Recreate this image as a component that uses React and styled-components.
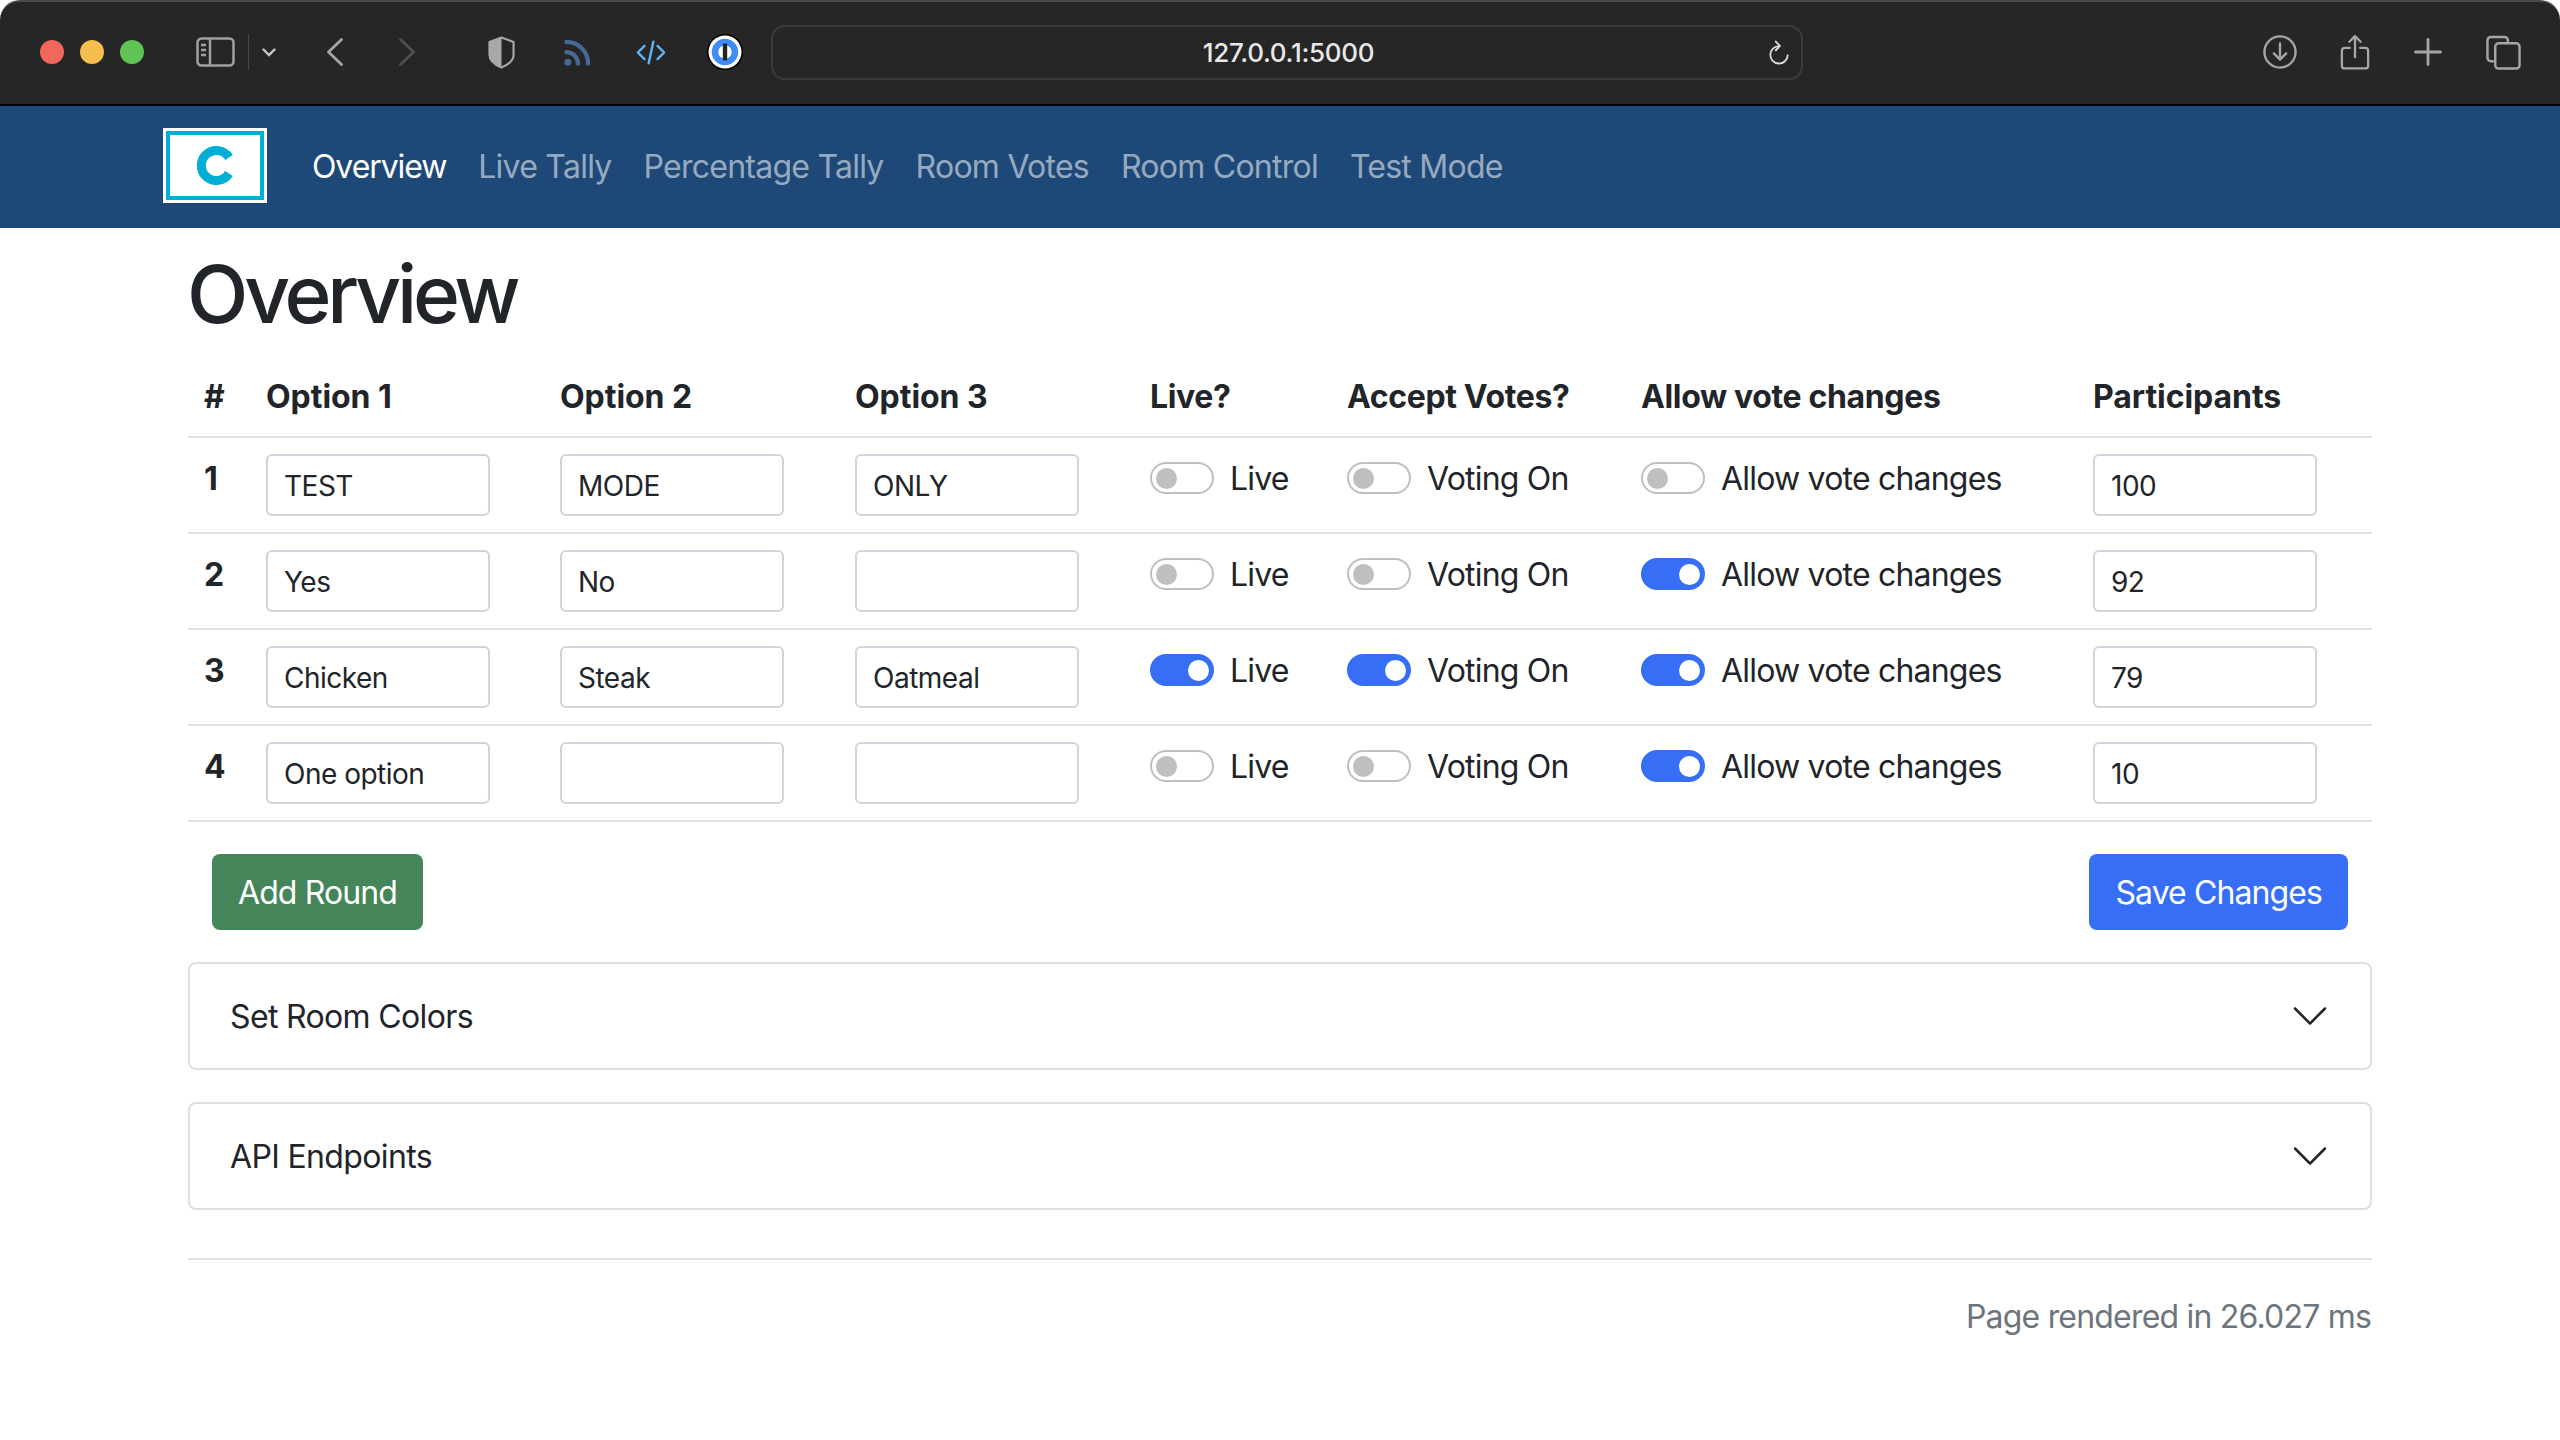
import React from 'react';
import styled, { createGlobalStyle } from 'styled-components';

const GlobalStyle = createGlobalStyle`
  * { box-sizing: border-box; }
  html, body { margin: 0; padding: 0; background: #fff; }
  body {
    font-family: Inter, "Liberation Sans", sans-serif;
    font-size: 32px;
    line-height: 48px;
    letter-spacing: -0.8px;
    color: #212529;
  }
`;

const Chrome = styled.div`
  display: flex;
  align-items: center;
  height: 106px;
  padding-bottom: 2px;
  background: #262626;
  border-top: 2px solid #4a4a4a;
  border-bottom: 2px solid #000;
  border-radius: 20px 20px 0 0;
`;

const Dot = styled.span`
  width: 24px;
  height: 24px;
  margin-left: ${(p) => p.$gap}px;
  border-radius: 50%;
  background: ${(p) => p.$color};
`;

const Glyph = styled.svg`
  display: block;
  flex: none;
  margin-left: ${(p) => p.$gap}px;
`;

const UrlBar = styled.div`
  position: relative;
  display: flex;
  align-items: center;
  justify-content: center;
  flex: none;
  width: 1032px;
  height: 55px;
  margin-left: 28px;
  padding: 2px 0 0 3px;
  border: 2px solid #3b3b3b;
  border-radius: 14px;
  font-size: 26px;
  font-weight: 500;
  letter-spacing: -0.3px;
  color: #e8e8e8;
`;

const Reload = styled.svg`
  position: absolute;
  right: 11px;
  top: 13px;
`;

const Navbar = styled.nav`
  display: flex;
  align-items: center;
  height: 122px;
  padding-left: 163px;
  background: #1d4878;
`;

const LogoMark = styled.svg`
  display: block;
  flex: none;
  margin-bottom: 3px;
`;

const NavLink = styled.a`
  padding: 0 16px;
  color: ${(p) => (p.$active ? '#fff' : 'rgba(255, 255, 255, 0.55)')};
  font-size: 32px;
  letter-spacing: ${(p) => (p.$active ? '-1.1px' : '-0.75px')};
  white-space: nowrap;
`;

const NavLinks = styled.div`
  display: flex;
  margin-left: 29px;
`;

const Main = styled.main`
  padding: 0 188px;
`;

const Title = styled.h1`
  margin: 18px 0 14px -1px;
  font-size: 80px;
  line-height: 96px;
  font-weight: 500;
  letter-spacing: -4.2px;
`;

const RoundsTable = styled.table`
  width: 2184px;
  border-collapse: collapse;
  table-layout: fixed;
`;

const HeadCell = styled.th`
  padding: 17px 16px 15px;
  border-bottom: 2px solid #dee2e6;
  text-align: left;
  font-weight: 700;
  letter-spacing: ${(p) => (p.$wide ? '-0.05px' : '-0.36px')};
  white-space: nowrap;
`;

const Row = styled.tr`
  height: 96px;
`;

const Cell = styled.td`
  padding: 16px;
  border-bottom: 2px solid #dee2e6;
  vertical-align: top;
`;

const RowNumber = styled(Cell).attrs({ as: 'th' })`
  padding-top: 17px;
  font-weight: 700;
  text-align: left;
`;

const TextInput = styled.input`
  display: block;
  width: 224px;
  height: 62px;
  padding: 5px 16px 3px;
  border: 2px solid #ced4da;
  border-radius: 6px;
  background: #fff;
  color: #212529;
  font-family: inherit;
  font-size: 28px;
  letter-spacing: -0.5px;
  outline: none;
`;

const SwitchLine = styled.label`
  display: flex;
  align-items: flex-start;
  padding-top: 1px;
  white-space: nowrap;
`;

const SwitchTrack = styled.span`
  position: relative;
  flex: none;
  width: 64px;
  height: 32px;
  margin: 7px 16px 0 0;
  border: 2px solid ${(p) => (p.$on ? '#366ff5' : '#bfbfbf')};
  border-radius: 16px;
  background: ${(p) => (p.$on ? '#366ff5' : '#fff')};

  &::after {
    content: '';
    position: absolute;
    top: 3.5px;
    left: ${(p) => (p.$on ? '35.5px' : '3.5px')};
    width: 21px;
    height: 21px;
    border-radius: 50%;
    background: ${(p) => (p.$on ? '#fff' : '#bfbfbf')};
  }
`;

const ActionRow = styled.div`
  display: flex;
  justify-content: space-between;
  padding: 32px 24px;
`;

const ActionButton = styled.button`
  height: 76px;
  padding: 0 26px;
  border: 0;
  border-radius: 8px;
  background: ${(p) => p.$bg};
  color: #fff;
  font-family: inherit;
  font-size: 32px;
  letter-spacing: -0.9px;
`;

const AccordionList = styled.div`
  display: flex;
  flex-direction: column;
  gap: 32px;
`;

const AccordionHeader = styled.button`
  display: flex;
  align-items: center;
  justify-content: space-between;
  width: 100%;
  height: 108px;
  padding: 0 40px;
  border: 2px solid #dfdfdf;
  border-radius: 8px;
  background: #fff;
  color: #212529;
  font-family: inherit;
  font-size: 32px;
  letter-spacing: -0.65px;
`;

const Divider = styled.hr`
  height: 2px;
  margin: 48px 0 0;
  border: 0;
  background: #dee2e6;
`;

const Footer = styled.footer`
  padding: 33px 1px 0 0;
  text-align: right;
  color: #6c757d;
  font-size: 32px;
`;

const Chevron = () => (
  <svg width="40" height="40" viewBox="0 0 16 16" fill="#212529">
    <path d="M1.646 4.646a.5.5 0 0 1 .708 0L8 10.293l5.646-5.647a.5.5 0 0 1 .708.708l-6 6a.5.5 0 0 1-.708 0l-6-6a.5.5 0 0 1 0-.708z" />
  </svg>
);

const Logo = () => (
  <LogoMark width="104" height="75" viewBox="0 0 104 75">
    <rect width="104" height="75" fill="#fff" />
    <rect x="5" y="5" width="94" height="65" fill="none" stroke="#00aed6" strokeWidth="4" />
    <path d="M66 29.5 A15 15 0 1 0 66 45.5" fill="none" stroke="#00aed6" strokeWidth="9" />
  </LogoMark>
);

const BrowserChrome = () => (
  <Chrome>
    <Dot $gap={40} $color="#f1675c" />
    <Dot $gap={16} $color="#f6bd4f" />
    <Dot $gap={16} $color="#60c454" />

    <Glyph $gap={52} width="39" height="30" viewBox="0 0 39 30" fill="none" stroke="#a0a0a0" strokeWidth="2.5">
      <rect x="1.5" y="1.5" width="36" height="27" rx="4" />
      <path d="M14 1.5v27M5 8h5M5 13h5M5 18h5" />
    </Glyph>
    <Glyph $gap={13} width="1" height="36" viewBox="0 0 1 36"><rect width="1" height="36" fill="#484848" /></Glyph>
    <Glyph $gap={13} width="14" height="9" viewBox="0 0 14 9" fill="none" stroke="#c8c8c8" strokeWidth="2.4" strokeLinecap="round">
      <path d="M1.5 1.5 7 7l5.5-5.5" />
    </Glyph>
    <Glyph $gap={51} width="16" height="28" viewBox="0 0 16 28" fill="none" stroke="#a6a6a6" strokeWidth="2.8" strokeLinecap="round" strokeLinejoin="round">
      <path d="M14.500 1.500 1.500 14l13 12.500" />
    </Glyph>
    <Glyph $gap={56} width="16" height="28" viewBox="0 0 16 28" fill="none" stroke="#4f4f4f" strokeWidth="2.8" strokeLinecap="round" strokeLinejoin="round">
      <path d="M1.500 1.500 14.500 14l-13 12.500" />
    </Glyph>

    <Glyph $gap={73} width="27" height="33" viewBox="0 0 28 34" fill="none">
      <path d="M14 1.500 26.500 6v13c0 6.500-5 10.500-12.500 13.500C6.500 29.500 1.500 25.500 1.500 19V6z" stroke="#a8a8a8" strokeWidth="2.200" strokeLinejoin="round" />
      <path d="M14 1.500v31C6.500 29.500 1.500 25.500 1.500 19V6z" fill="#a8a8a8" />
    </Glyph>
    <Glyph $gap={49} width="27" height="27" viewBox="0 0 28 28" fill="none" stroke="#466a97" strokeWidth="4.400" strokeLinecap="round">
      <circle cx="4" cy="24" r="3.600" fill="#466a97" stroke="none" />
      <path d="M2.500 13.500a12 12 0 0 1 12 12" />
      <path d="M2.500 3a22.500 22.500 0 0 1 22.500 22.500" />
    </Glyph>
    <Glyph $gap={45} width="30" height="25" viewBox="0 0 32 26" fill="none" stroke="#5fb3f2" strokeWidth="2.600" strokeLinecap="round" strokeLinejoin="round">
      <path d="M9 6 2 13l7 7M23 6l7 7-7 7M18.500 1.500l-5 23" />
    </Glyph>
    <Glyph $gap={41} width="36" height="36" viewBox="0 0 36 36">
      <circle cx="18" cy="18" r="18" fill="#000" />
      <circle cx="18" cy="18" r="16.500" fill="#fff" />
      <circle cx="18" cy="18" r="10" fill="none" stroke="#3f8cf6" strokeWidth="6.500" />
      <rect x="15.800" y="9.500" width="4.400" height="17" rx="0.800" fill="#262626" />
    </Glyph>

    <UrlBar>
      127.0.0.1:5000
      <Reload width="22" height="26" viewBox="0 0 24 27" fill="none" stroke="#dcdcdc" strokeWidth="2" strokeLinecap="round" strokeLinejoin="round">
        <path d="M12 6a9.500 9.500 0 1 0 9.500 10" />
        <path d="M8.500 1 13 5.800 8.500 10.500" />
      </Reload>
    </UrlBar>

    <Glyph $gap={460} width="34" height="34" viewBox="0 0 36 36" fill="none" stroke="#a6a6a6" strokeWidth="2.500" strokeLinecap="round" strokeLinejoin="round">
      <circle cx="18" cy="18" r="16.500" />
      <path d="M18 9v17M11.500 19.500 18 26l6.500-6.500" />
    </Glyph>
    <Glyph $gap={43} width="30" height="37" viewBox="0 0 32 38" fill="none" stroke="#a6a6a6" strokeWidth="2.500" strokeLinecap="round" strokeLinejoin="round">
      <path d="M10.500 14H5a3 3 0 0 0-3 3v16a3 3 0 0 0 3 3h22a3 3 0 0 0 3-3V17a3 3 0 0 0-3-3h-5.500" />
      <path d="M16 24V2M10 7.500 16 1.500l6 6" />
    </Glyph>
    <Glyph $gap={44} width="28" height="28" viewBox="0 0 28 28" fill="none" stroke="#a6a6a6" strokeWidth="2.800" strokeLinecap="round">
      <path d="M14 1.500v25M1.500 14h25" />
    </Glyph>
    <Glyph $gap={44} width="35" height="35" viewBox="0 0 36 36" fill="none" stroke="#a6a6a6" strokeWidth="2.500" strokeLinejoin="round">
      <path d="M8 27H5a3.500 3.500 0 0 1-3.500-3.500v-18A3.500 3.500 0 0 1 5 2h14a3.500 3.500 0 0 1 3.500 3.500V8" />
      <rect x="9.500" y="8.500" width="25" height="26" rx="3.500" />
    </Glyph>
  </Chrome>
);

const rounds = [
  { n: 1, options: ['TEST', 'MODE', 'ONLY'], live: false, voting: false, changes: false, participants: '100' },
  { n: 2, options: ['Yes', 'No', ''], live: false, voting: false, changes: true, participants: '92' },
  { n: 3, options: ['Chicken', 'Steak', 'Oatmeal'], live: true, voting: true, changes: true, participants: '79' },
  { n: 4, options: ['One option', '', ''], live: false, voting: false, changes: true, participants: '10' },
];

const columnWidths = [62, 294, 295, 295, 197, 294, 452, 295];
const headings = ['#', 'Option 1', 'Option 2', 'Option 3', 'Live?', 'Accept Votes?', 'Allow vote changes', 'Participants'];
const wideHeadings = ['Option 1', 'Option 2', 'Option 3', 'Participants'];
const links = ['Overview', 'Live Tally', 'Percentage Tally', 'Room Votes', 'Room Control', 'Test Mode'];

const Toggle = ({ on, label }) => (
  <SwitchLine>
    <SwitchTrack $on={on} />
    {label}
  </SwitchLine>
);

export default function App() {
  return (
    <>
      <GlobalStyle />
      <BrowserChrome />
      <Navbar>
        <Logo />
        <NavLinks>
          {links.map((link, i) => (
            <NavLink key={link} $active={i === 0}>{link}</NavLink>
          ))}
        </NavLinks>
      </Navbar>
      <Main>
        <Title>Overview</Title>
        <RoundsTable>
          <colgroup>
            {columnWidths.map((w, i) => <col key={i} width={w} />)}
          </colgroup>
          <thead>
            <tr>
              {headings.map((h) => <HeadCell key={h} $wide={wideHeadings.includes(h)}>{h}</HeadCell>)}
            </tr>
          </thead>
          <tbody>
            {rounds.map((round) => (
              <Row key={round.n}>
                <RowNumber>{round.n}</RowNumber>
                {round.options.map((value, i) => (
                  <Cell key={i}><TextInput defaultValue={value} readOnly /></Cell>
                ))}
                <Cell><Toggle on={round.live} label="Live" /></Cell>
                <Cell><Toggle on={round.voting} label="Voting On" /></Cell>
                <Cell><Toggle on={round.changes} label="Allow vote changes" /></Cell>
                <Cell><TextInput defaultValue={round.participants} readOnly /></Cell>
              </Row>
            ))}
          </tbody>
        </RoundsTable>
        <ActionRow>
          <ActionButton $bg="#448659">Add Round</ActionButton>
          <ActionButton $bg="#366ff5">Save Changes</ActionButton>
        </ActionRow>
        <AccordionList>
          <AccordionHeader>Set Room Colors<Chevron /></AccordionHeader>
          <AccordionHeader>API Endpoints<Chevron /></AccordionHeader>
        </AccordionList>
        <Divider />
        <Footer>Page rendered in 26.027 ms</Footer>
      </Main>
    </>
  );
}
